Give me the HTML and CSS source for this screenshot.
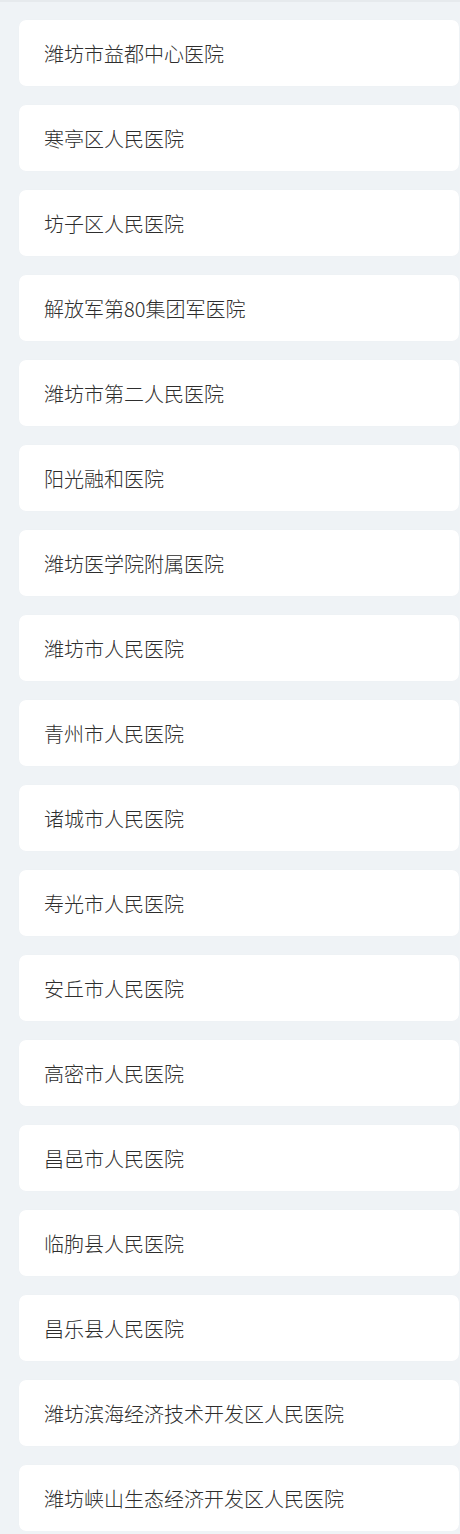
FILE: index.html
```html
<!DOCTYPE html>
<html lang="zh">
<head>
<meta charset="utf-8">
<link rel="stylesheet" href="styles.css">
</head>
<body>
<div class="topbar"></div>
<ul class="list">
  <li class="card">潍坊市益都中心医院</li>
  <li class="card">寒亭区人民医院</li>
  <li class="card">坊子区人民医院</li>
  <li class="card">解放军第80集团军医院</li>
  <li class="card">潍坊市第二人民医院</li>
  <li class="card">阳光融和医院</li>
  <li class="card">潍坊医学院附属医院</li>
  <li class="card">潍坊市人民医院</li>
  <li class="card">青州市人民医院</li>
  <li class="card">诸城市人民医院</li>
  <li class="card">寿光市人民医院</li>
  <li class="card">安丘市人民医院</li>
  <li class="card">高密市人民医院</li>
  <li class="card">昌邑市人民医院</li>
  <li class="card">临朐县人民医院</li>
  <li class="card">昌乐县人民医院</li>
  <li class="card">潍坊滨海经济技术开发区人民医院</li>
  <li class="card">潍坊峡山生态经济开发区人民医院</li>
</ul>
</body>
</html>
```
FILE: styles.css
```css
html, body {
  margin: 0;
  padding: 0;
  background: #eff3f6;
  font-family: "Noto Sans CJK SC", "Noto Sans", sans-serif;
}
.topbar {
  height: 2px;
  background: #e6eaed;
}
.list {
  list-style: none;
  margin: 0;
  padding: 18px 1px 0 19px;
  display: flex;
  flex-direction: column;
  gap: 19px;
}
.card {
  height: 66px;
  box-sizing: border-box;
  background: #ffffff;
  border-radius: 7px;
  padding-left: 25px;
  display: flex;
  align-items: center;
  font-size: 20px;
  font-weight: 300;
  color: #2e2e2e;
  box-shadow: 0 0 1px rgba(0,0,0,0.04);
}
```
